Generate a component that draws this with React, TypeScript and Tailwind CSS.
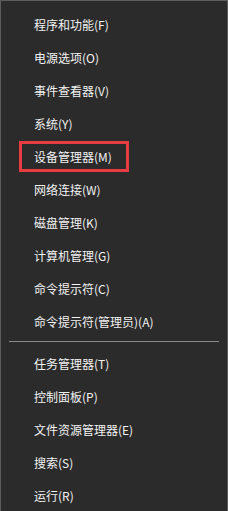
import React from 'react';

const topItems = [
  '程序和功能(F)',
  '电源选项(O)',
  '事件查看器(V)',
  '系统(Y)',
  '设备管理器(M)',
  '网络连接(W)',
  '磁盘管理(K)',
  '计算机管理(G)',
  '命令提示符(C)',
  '命令提示符(管理员)(A)',
];

const bottomItems = ['任务管理器(T)', '控制面板(P)', '文件资源管理器(E)', '搜索(S)', '运行(R)'];

const MenuItem: React.FC<{ label: string; highlight?: boolean }> = ({ label, highlight }) => (
  <div className="h-[33px] flex items-center pl-[33px] relative">
    {highlight && (
      <div className="absolute left-[18px] top-[1px] w-[110px] h-[31px] border-[3px] border-[#e63c42]" />
    )}
    <span className="text-[12px] leading-none text-[#f2f2f2] whitespace-nowrap">{label}</span>
  </div>
);

export default function App() {
  return (
    <div
      className="w-[228px] h-[511px] overflow-hidden bg-[#2b2b2b] border-l border-t border-r border-[#5c5c5c] pt-[7px]"
      style={{ fontFamily: '"Noto Sans CJK SC", "Liberation Sans", sans-serif' }}
    >
      {topItems.map((t) => (
        <MenuItem key={t} label={t} highlight={t === '设备管理器(M)'} />
      ))}
      <div className="h-[9px] pt-[3px] px-[8px]">
        <div className="h-px bg-[#8a8a8a]" />
      </div>
      {bottomItems.map((t) => (
        <MenuItem key={t} label={t} />
      ))}
    </div>
  );
}
